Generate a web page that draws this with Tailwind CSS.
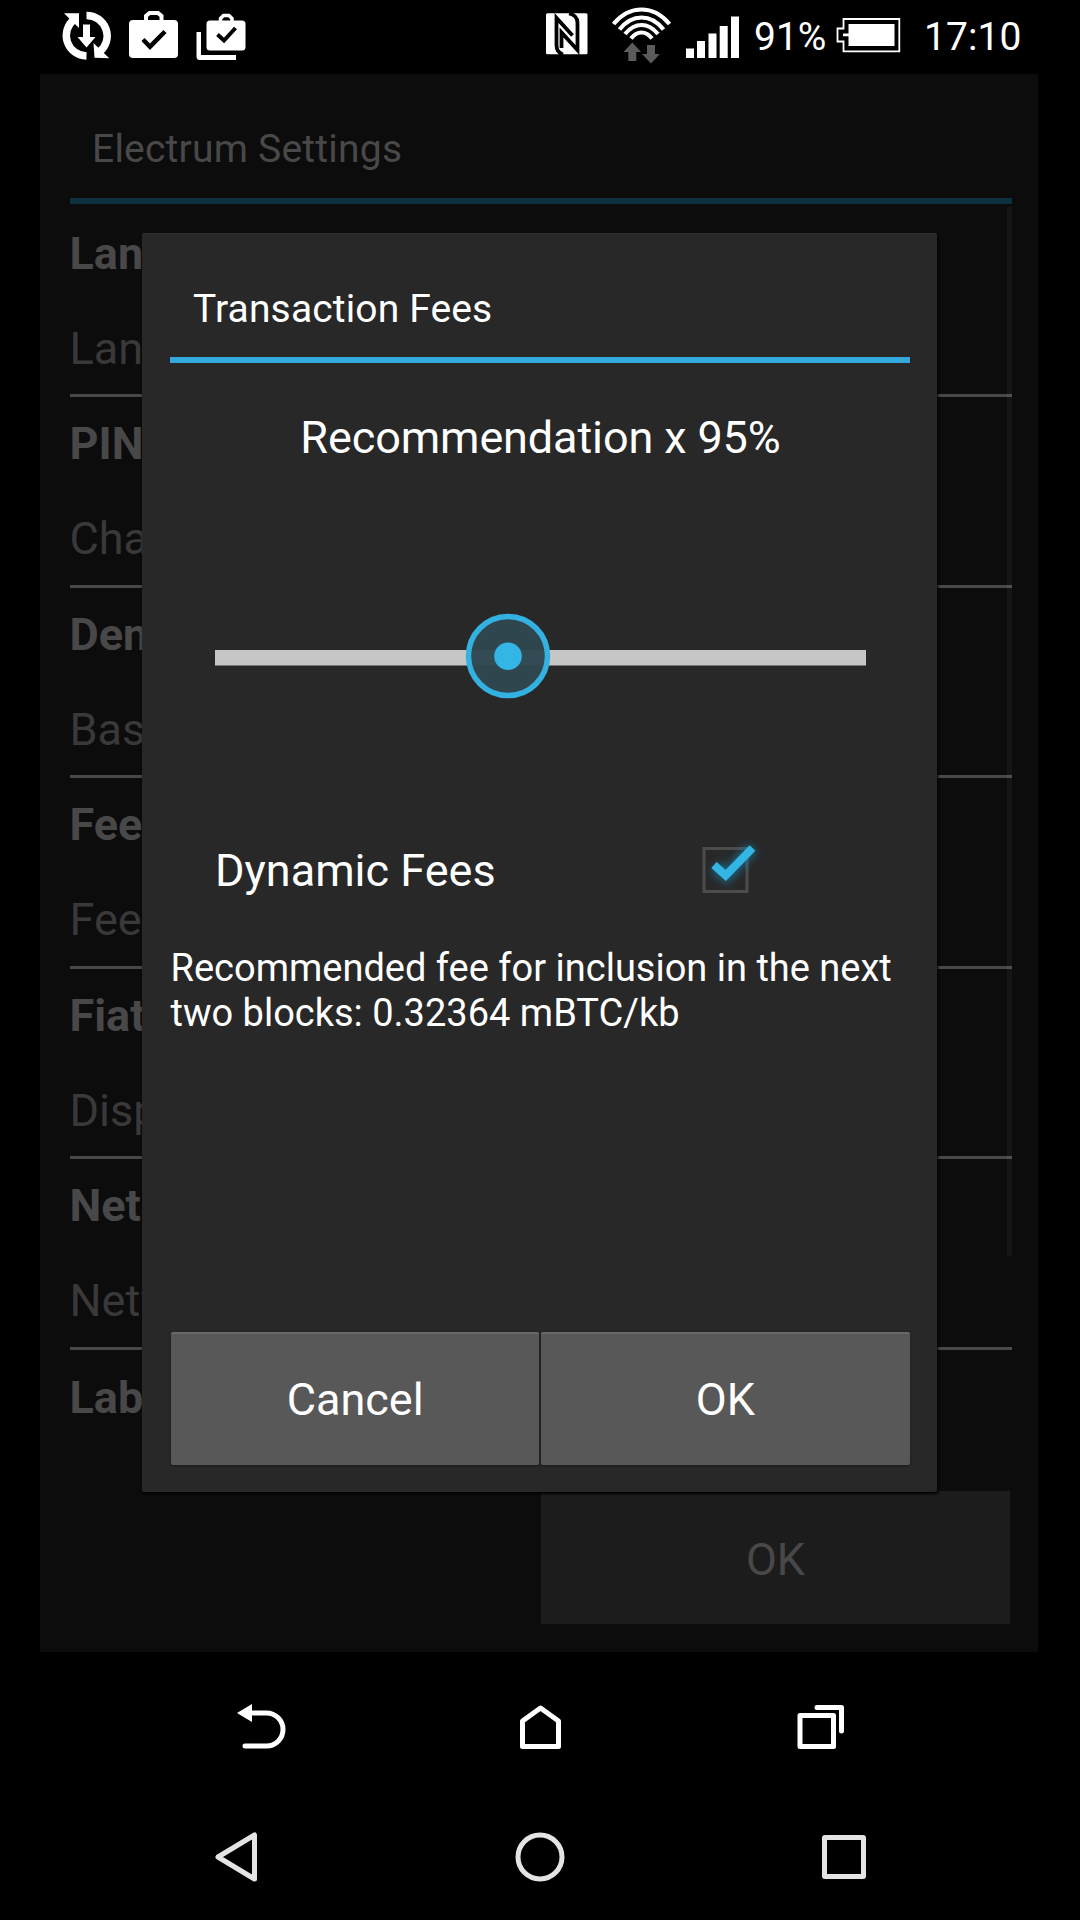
<!DOCTYPE html>
<html lang="en">
<head>
<meta charset="utf-8">
<title>Electrum Settings</title>
<script src="https://cdn.jsdelivr.net/npm/@tailwindcss/browser@4"></script>
</head>
<body class="bg-black">
<div class="relative flex h-[1920px] w-[1080px] flex-col overflow-hidden bg-black font-[Roboto,sans-serif] text-white">

  <!-- Status bar -->
  <header class="flex h-[74px] shrink-0 pl-[54px]">
    <svg class="h-[74px] w-[66px] shrink-0" viewBox="54 0 66 74" fill="#fff">
      <path d="M86.5 56A20.5 20.5 0 0 1 74 19.500" fill="none" stroke="#fff" stroke-width="7.500"/>
      <path d="M86.500 15.500A20.500 20.500 0 0 1 99.500 52" fill="none" stroke="#fff" stroke-width="7.500"/>
      <path d="M64 13.300h15v14.700zM93.500 43l1 14.800 14.800.4zM83 24.500h7V37h5.500l-9 10.500-9-10.500H83z"/>
    </svg>
    <svg class="h-[74px] w-[67px] shrink-0" viewBox="120 0 67 74">
      <path d="M146 22v-6l3.500-3h8.500l3.500 3v6" fill="none" stroke="#fff" stroke-width="4"/>
      <rect x="129" y="20" width="49" height="38" rx="4" fill="#fff"/>
      <path d="M143 39.500l7 7.200 15-15.200" fill="none" stroke="#000" stroke-width="4.500"/>
    </svg>
    <svg class="h-[74px] w-[67px] shrink-0" viewBox="187 0 67 74">
      <path d="M220.500 22v-3.500l3-3h5.500l3 3V22" fill="none" stroke="#fff" stroke-width="3.500"/>
      <rect x="206.500" y="20.500" width="39" height="30" rx="3.500" fill="#fff"/>
      <path d="M217.500 34.500l6.500 6 11.500-12.500" fill="none" stroke="#000" stroke-width="4"/>
      <path d="M196.500 32h4.500v23h35v5h-36q-3.500 0-3.500-3.500z" fill="#fff"/>
    </svg>
    <div class="w-[286px] shrink-0"></div>
    <svg class="h-[74px] w-[60px] shrink-0" viewBox="540 0 60 74">
      <rect x="546" y="13.300" width="41.500" height="41" rx="1.500" fill="#fff"/>
      <path d="M563 54.500Q556.500 52.500 556.500 45V18L572.500 35.500M569 13.500Q577.500 15 577.500 23V50L561.500 32.500V48" fill="none" stroke="#000" stroke-width="3.800"/>
    </svg>
    <svg class="h-[74px] w-[80px] shrink-0" viewBox="600 0 80 74">
      <g fill="none" stroke="#fff" stroke-width="4.200">
        <path d="M613.500 24Q625.500 9.500 641.500 9.500T669.500 24"/>
        <path d="M619.500 29.500Q629 17.500 641.500 17.500T663.500 29.500"/>
        <path d="M625 34Q632.500 25 641.500 25T658 34"/>
        <path d="M631 38.500Q635.500 32.500 641.500 32.500T652 38.500"/>
      </g>
      <path d="M632.300 42.500l8.700 9.500h-4.700v9h-8V52h-4.800zM651 63.500l-9-9.500h5v-9h8v9h4.800z" fill="#5b5b5b"/>
    </svg>
    <svg class="h-[74px] w-[74px] shrink-0" viewBox="680 0 74 74" fill="#fff">
      <path d="M686 48.500h8V58h-8zM697 41h8v17h-8zM708.500 33.500h8V58h-8zM719.700 26h8v32h-8zM731 16.500h8V58h-8z"/>
    </svg>
    <div class="w-[77px] shrink-0 whitespace-nowrap text-[39px] leading-[74px]">91%</div>
    <svg class="h-[74px] w-[93px] shrink-0" viewBox="831 0 93 74">
      <path d="M843.500 19h55.800v32.300h-55.800v-9.800h-6v-13h6z" fill="none" stroke="#fff" stroke-width="1.800"/>
      <path d="M848.500 24H894.500v22h-46v-9.800h-5.500v-2.600h5.500z" fill="#fff"/>
    </svg>
    <div class="whitespace-nowrap text-[39px] leading-[74px] tracking-[0.1px]">17:10</div>
  </header>

  <!-- Dimmed settings window -->
  <main class="ml-[40px] flex h-[1578px] w-[998px] shrink-0 flex-col bg-[#0c0c0c] pr-[26px] pl-[29.500px]">
    <h1 class="h-[130px] shrink-0 border-b-[6px] border-[#0c303e] pl-[22.500px] text-[39px] leading-[151px] tracking-[0.22px] text-[#484848]">Electrum Settings</h1>
    <div class="flex h-[1284px] shrink-0 overflow-hidden pt-[2.500px]">
      <div class="w-full shrink-0">
        <section class="h-[190.6px] border-b-[3px] border-[#484848] text-[45px] text-[#393939]"><h2 class="h-[95px] leading-[94px] font-bold text-[#484848]">Lan</h2><p class="leading-[93px]">Lan</p></section>
        <section class="h-[190.6px] border-b-[3px] border-[#484848] text-[45px] text-[#393939]"><h2 class="h-[95px] leading-[94px] font-bold text-[#484848]">PIN</h2><p class="leading-[93px]">Cha</p></section>
        <section class="h-[190.6px] border-b-[3px] border-[#484848] text-[45px] text-[#393939]"><h2 class="h-[95px] leading-[94px] font-bold text-[#484848]">Den</h2><p class="leading-[93px]">Bas</p></section>
        <section class="h-[190.6px] border-b-[3px] border-[#484848] text-[45px] text-[#393939]"><h2 class="h-[95px] leading-[94px] font-bold text-[#484848]">Fee</h2><p class="leading-[93px]">Fee</p></section>
        <section class="h-[190.6px] border-b-[3px] border-[#484848] text-[45px] text-[#393939]"><h2 class="h-[95px] leading-[94px] font-bold text-[#484848]">Fiat</h2><p class="leading-[93px]">Disp</p></section>
        <section class="h-[190.6px] border-b-[3px] border-[#484848] text-[45px] text-[#393939]"><h2 class="h-[95px] leading-[94px] font-bold text-[#484848]">Net</h2><p class="leading-[93px]">Netw</p></section>
        <section class="text-[45px]"><h2 class="h-[95px] leading-[95px] font-bold text-[#484848]">Lab</h2></section>
      </div>
      <div class="-ml-[5px] h-[1049px] w-[5px] shrink-0 bg-white/4"></div>
    </div>
    <div class="mt-[3px] mr-[2px] h-[133px] w-[469px] shrink-0 self-end bg-[#1c1c1c] text-center text-[45px] leading-[137px] text-[#484848]">OK</div>
  </main>

  <!-- Navigation keys -->
  <nav class="flex h-[138px] shrink-0 justify-between px-[227px]">
    <svg class="h-[138px] w-[66px]" viewBox="227 1652 66 138">
      <path d="M250 1713H266.500a16.500 16.500 0 0 1 0 33H245" fill="none" stroke="#fff" stroke-width="5" stroke-linecap="round"/>
      <path d="M237 1713l15-9v18z" fill="#fff"/>
    </svg>
    <svg class="h-[138px] w-[66px]" viewBox="507 1652 66 138">
      <path d="M522.500 1721L540.500 1708l18 13v25.500h-36z" fill="none" stroke="#fff" stroke-width="5" stroke-linejoin="round"/>
    </svg>
    <svg class="h-[138px] w-[66px]" viewBox="787 1652 66 138">
      <path d="M800 1715.500h33.500v31H800zM817 1707.500h24.500V1731" fill="none" stroke="#fff" stroke-width="5" stroke-linecap="round" stroke-linejoin="round"/>
    </svg>
  </nav>
  <nav class="flex h-[130px] shrink-0 justify-between px-[203px]">
    <svg class="h-[130px] w-[66px]" viewBox="203 1790 66 130">
      <path d="M218 1857l36.500-22v44z" fill="none" stroke="#e4e4e4" stroke-width="5" stroke-linejoin="round"/>
    </svg>
    <svg class="h-[130px] w-[66px]" viewBox="507 1790 66 130">
      <circle cx="540" cy="1857" r="22" fill="none" stroke="#e4e4e4" stroke-width="5"/>
    </svg>
    <svg class="h-[130px] w-[66px]" viewBox="811 1790 66 130">
      <rect x="824.500" y="1837.500" width="39" height="39" rx=".5" fill="none" stroke="#e4e4e4" stroke-width="5" stroke-linejoin="round"/>
    </svg>
  </nav>

  <!-- Fee dialog -->
  <div role="dialog" class="absolute top-[233px] left-[142px] flex h-[1259px] w-[795px] flex-col rounded-[2px] border-t border-[#303030] bg-[#282828] pr-[27px] pl-[28px] shadow-[1px_2px_3px_#000]">
    <h2 class="h-[129px] shrink-0 border-b-[6px] border-[#33aadb] pl-[23px] text-[39px] leading-[150px] tracking-[0.14px]">Transaction Fees</h2>
    <div class="h-[150px] shrink-0 pl-px text-center text-[45px] leading-[150px] tracking-[-0.12px]">Recommendation x 95%</div>
    <svg class="h-[285px] w-[740px] shrink-0" viewBox="170 513 740 285">
      <rect x="215" y="650" width="651" height="15.500" fill="#c6c6c6"/>
      <circle cx="508" cy="656" r="39.500" fill="#30464f" stroke="#33b1e1" stroke-width="5.500"/>
      <path d="M472 650h72v15.500h-72z" fill="#36505a" opacity=".5"/>
      <circle cx="508" cy="656.300" r="13.800" fill="#33b5e5"/>
    </svg>
    <div class="flex h-[144px] shrink-0 justify-between pl-[45px]">
      <span class="text-[45px] leading-[146px]">Dynamic Fees</span>
      <svg class="h-[144px] w-[220px]" viewBox="690 798 220 144">
        <rect x="704" y="848.500" width="43" height="43" fill="none" stroke="#4c4c4c" stroke-width="3"/>
        <path class="blur-[4px]" d="M715 866.500l11 9.500 26.500-28" fill="none" stroke="#1688b4" stroke-width="12" opacity=".65"/>
        <path d="M714 865l11.700 10.500L752.500 848" fill="none" stroke="#33b5e5" stroke-width="8"/>
      </svg>
    </div>
    <p class="h-[390px] shrink-0 whitespace-nowrap pt-[4px] pl-[0.5px] text-[38px] leading-[45px]">Recommended fee for inclusion in the next<br>two blocks: 0.32364 mBTC/kb</p>
    <div class="flex h-[133px] shrink-0 gap-[2px] pr-[0.5px] pl-px text-center text-[45px] leading-[132px]">
      <div class="flex-1 rounded-[2px] border-t-2 border-[#696969] bg-[#585858] shadow-[0_1px_2px_#1a1a1a]">Cancel</div>
      <div class="flex-1 rounded-[2px] border-t-2 border-[#696969] bg-[#585858] shadow-[0_1px_2px_#1a1a1a]">OK</div>
    </div>
  </div>
</div>
</body>
</html>
